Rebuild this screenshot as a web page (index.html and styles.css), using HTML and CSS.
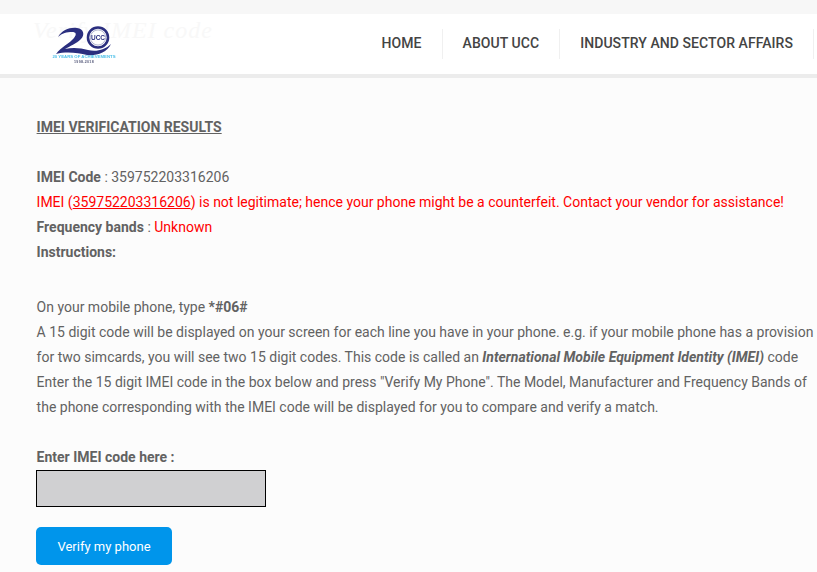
FILE: index.html
```html
<!DOCTYPE html>
<html lang="en">
<head>
<meta charset="UTF-8">
<meta name="viewport" content="width=device-width, initial-scale=1.0">
<title>Verify IMEI code</title>
<link rel="stylesheet" href="styles.css">
</head>
<body>

<div class="header">
    <div class="page-title">Verify IMEI code</div>
    <a class="logo" href="#home">
        <svg width="64" height="40" viewBox="0 0 64 40">
            <path d="M6 13 C10 6 18 3 25 4 C32 5 33 11 29 15 C24 20 18 22 13 25 C21 23 29 24 36 26 C44 28 53 26 59 20 C55 29 44 32 35 31 C26 29 15 27 4 30 C9 23 18 19 22 14 C25 10 24 8 20 8 C15 8 10 9 6 13 Z" fill="#2b2f7f"/>
            <circle cx="46" cy="13.5" r="10" fill="#fff" stroke="#2b2f7f" stroke-width="2.6"/>
            <circle cx="46" cy="13.5" r="7.6" fill="none" stroke="#8d90b8" stroke-width="0.7"/>
            <text class="logo-ucc" x="46" y="16.2" text-anchor="middle">UCC</text>
            <text class="logo-years" x="32" y="33.5" text-anchor="middle">20 YEARS OF ACHIEVEMENTS</text>
            <text class="logo-dates" x="32" y="38.5" text-anchor="middle">1998-2018</text>
        </svg>
    </a>
    <div class="nav">
        <a href="#home">Home</a>
        <a href="#about">About UCC</a>
        <a href="#industry">Industry and Sector Affairs</a>
    </div>
</div>

<div class="content">
    <h4 class="results-title">IMEI VERIFICATION RESULTS</h4>

    <div class="results">
        <b>IMEI Code</b> : 359752203316206<br>
        <span class="error">IMEI (<u>359752203316206</u>) is not legitimate; hence your phone might be a counterfeit. Contact your vendor for assistance!</span><br>
        <b>Frequency bands</b> : <span class="error">Unknown</span><br>
        <b>Instructions:</b>
    </div>

    <p class="instructions">
        On your mobile phone, type <b>*#06#</b><br>
        A 15 digit code will be displayed on your screen for each line you have in your phone. e.g. if your mobile phone has a provision<br>
        for two simcards, you will see two 15 digit codes. This code is called an <b><i>International Mobile Equipment Identity (IMEI)</i></b> code<br>
        Enter the 15 digit IMEI code in the box below and press "Verify My Phone". The Model, Manufacturer and Frequency Bands of<br>
        the phone corresponding with the IMEI code will be displayed for you to compare and verify a match.
    </p>

    <form class="imei-form" onsubmit="return false">
        <label for="imei_code">Enter IMEI code here :</label>
        <input type="text" id="imei_code" name="imei_code">
        <input type="submit" value="Verify my phone">
    </form>
</div>

</body>
</html>
```

FILE: styles.css
```css
html, body {
    height: 100%;
}

body {
    font-family: Roboto, Arial, sans-serif;
    font-size: 14px;
    line-height: 25px;
    color: #626262;
    margin: 0;
    background-color: #fcfcfc;
    overflow: hidden;
}

/* Header */
.header {
    position: relative;
    display: flex;
    align-items: center;
    justify-content: space-between;
    height: 60px;
    border-top: 14px solid #f7f7f7;
    background-color: #fff;
    box-shadow: 0 4px 0 #ececec;
}

.page-title {
    position: absolute;
    left: 33px;
    top: 4px;
    font-family: "Liberation Serif", "DejaVu Serif", serif;
    font-style: italic;
    font-size: 24px;
    letter-spacing: 1px;
    color: #f8f8f8;
    white-space: nowrap;
}

.logo {
    position: relative;
    display: block;
    margin-left: 52px;
    height: 40px;
    filter: blur(0.3px);
}

.logo-ucc {
    font-family: "Liberation Sans", sans-serif;
    font-size: 6.5px;
    font-weight: bold;
    fill: #2b2f7f;
}

.logo-years {
    font-family: "Liberation Sans", sans-serif;
    font-size: 4.3px;
    font-weight: bold;
    fill: #4fc0e8;
}

.logo-dates {
    font-family: "Liberation Sans", sans-serif;
    font-size: 3.6px;
    font-weight: bold;
    letter-spacing: 0.3px;
    fill: #55597a;
}

/* Nav */
.nav {
    display: flex;
    margin-right: 3px;
    white-space: nowrap;
}

.nav a {
    display: block;
    padding: 0 20px;
    height: 30px;
    line-height: 28px;
    font-size: 14px;
    font-weight: 500;
    letter-spacing: 0.06px;
    text-transform: uppercase;
    text-decoration: none;
    color: #444;
    border-right: 1px solid #f0f0f0;
}

/* Content */
.content {
    padding: 0 0 0 36.6px;
    white-space: nowrap;
}

.results-title {
    margin: 41px 0 25px;
    font-size: 14px;
    font-weight: 700;
    line-height: 25px;
    text-decoration: underline;
}

.results {
    margin-bottom: 30px;
}

.error {
    color: #ff0000;
}

.instructions {
    margin: 0 0 25px;
}

.imei-form label {
    display: block;
    font-weight: bold;
}

.imei-form input[type="text"] {
    display: block;
    box-sizing: border-box;
    width: 230px;
    height: 37px;
    margin: 0 0 20px -0.6px;
    padding: 10px;
    border: 1px solid #000;
    background-color: #d0d0d2;
}

.imei-form input[type="submit"] {
    display: block;
    box-sizing: border-box;
    width: 136px;
    height: 38px;
    margin-left: -0.6px;
    font-family: Roboto, Arial, sans-serif;
    font-size: 13px;
    color: #fff;
    background-color: #0095eb;
    border: none;
    border-radius: 5px;
    cursor: pointer;
}
```
